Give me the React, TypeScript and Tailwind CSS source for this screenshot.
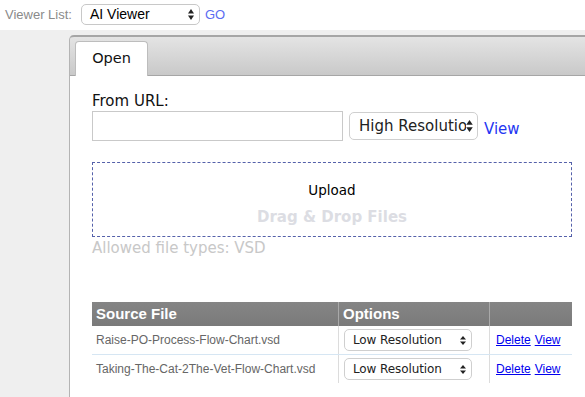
import React from "react";

const Arrows = ({ w = 6, h = 9 }: { w?: number; h?: number }) => (
  <svg width={w} height={h} viewBox="0 0 6 9" className="shrink-0">
    <polygon points="0,3.6 3,0 6,3.6" fill="#222" />
    <polygon points="0,5.4 3,9 6,5.4" fill="#222" />
  </svg>
);

export default function App() {
  const rows = [
    "Raise-PO-Process-Flow-Chart.vsd",
    "Taking-The-Cat-2The-Vet-Flow-Chart.vsd",
  ];
  return (
    <div className="w-[585px] h-[397px] overflow-hidden bg-white flex flex-col">
      {/* top bar */}
      <div className="h-[30px] shrink-0 flex items-center pl-[5px]" style={{ fontFamily: '"Liberation Sans", Arial, sans-serif' }}>
        <span className="text-[13px] text-[#8a8a8a] mr-[9px]">Viewer List:</span>
        <div className="w-[119px] h-[21px] mt-[-2px] border border-[#c8c8c8] rounded-[5px] flex items-center justify-between pl-[8px] pr-[5px] bg-white">
          <span className="text-[14px] text-black">AI Viewer</span>
          <svg width="6" height="11" viewBox="0 0 6 11">
            <polygon points="0,4.4 3,0 6,4.4" fill="#222" />
            <polygon points="0,6.6 3,11 6,6.6" fill="#222" />
          </svg>
        </div>
        <span className="text-[13px] text-[#5b6cf2] ml-[5px]">GO</span>
      </div>

      {/* main area */}
      <div className="flex-1 bg-[#efefef] pl-[69px] pt-[5px]">
        <div className="w-[560px] h-full bg-white border-l border-[#b4b4b4] rounded-tl-[5px] flex flex-col">
          {/* tab header */}
          <div className="h-[41px] shrink-0 rounded-tl-[4px] border-t-2 border-b border-[#a6a6a6] bg-gradient-to-b from-[#e4e4e4] to-[#c9c9c9] flex items-end pl-[5px]">
            <div
              className="w-[73px] h-[35px] -mb-px bg-white border border-b-0 border-[#bdbdbd] rounded-t-[4px] flex items-center justify-center text-[14.5px] text-[#111]"
              style={{ fontFamily: '"DejaVu Sans", Verdana, sans-serif' }}
            >
              Open
            </div>
          </div>

          {/* body */}
          <div className="pl-[22px] pt-[16px] w-[502px]" style={{ fontFamily: '"DejaVu Sans", Verdana, sans-serif' }}>
            <div className="text-[15px] leading-[18px] text-[#111]">From URL:</div>
            <div className="flex items-center mt-[1px]">
              <div className="w-[251px] h-[30px] border border-[#c9c9c9] bg-white" />
              <div className="ml-[6px] w-[129px] h-[28px] border border-[#cfcfcf] rounded-[5px] flex items-center pl-[9px] pr-[4px] overflow-hidden">
                <span className="text-[15px] text-[#222] whitespace-nowrap overflow-hidden w-[109px]">High Resolution</span>
                <svg width="7" height="12" viewBox="0 0 6 11" className="shrink-0">
                  <polygon points="0,4.4 3,0 6,4.4" fill="#222" />
                  <polygon points="0,6.6 3,11 6,6.6" fill="#222" />
                </svg>
              </div>
              <span className="ml-[6px] mt-[6px] text-[15px] text-[#1f36f2]">View</span>
            </div>

            <div className="mt-[21px] w-[480px] h-[75px] border border-dashed border-[#5561aa] flex flex-col items-center pt-[19px]">
              <div className="text-[13.5px] leading-[16px] text-black">Upload</div>
              <div className="mt-[10px] text-[15px] leading-[18px] font-bold text-[#dcdde3]">Drag &amp; Drop Files</div>
            </div>
            <div className="mt-[2px] text-[15px] leading-[18px] text-[#c8c8c8]">Allowed file types: VSD</div>

            {/* table */}
            <div className="mt-[45px] w-[480px]">
              <div
                className="h-[24px] flex bg-gradient-to-b from-[#858585] to-[#7a7a7a] text-white font-bold text-[15px]"
                style={{ fontFamily: '"Liberation Sans", Arial, sans-serif' }}
              >
                <div className="w-[247px] flex items-center pl-[4px] border-r border-[#a9a9a9]">Source File</div>
                <div className="w-[151px] flex items-center pl-[4px] border-r border-[#a9a9a9]">Options</div>
                <div className="flex-1" />
              </div>
              {rows.map((r, i) => (
                <div key={r} className={`flex h-[28px] ${i === 0 ? "border-b border-[#d6e6f3] h-[29px]" : ""}`}>
                  <div
                    className="w-[247px] flex items-center pl-[4px] border-r border-[#dcdcdc] text-[12px] text-[#666]"
                    style={{ fontFamily: '"Liberation Sans", Arial, sans-serif' }}
                  >
                    {r}
                  </div>
                  <div className="w-[151px] flex items-center pl-[5px] border-r border-[#dcdcdc]">
                    <div className="w-[128px] h-[22px] border border-[#cfcfcf] rounded-[5px] flex items-center justify-between pl-[8px] pr-[5px]">
                      <span className="text-[12px] text-[#222] tracking-[-0.1px]">Low Resolution</span>
                      <Arrows />
                    </div>
                  </div>
                  <div
                    className="flex-1 flex items-center pl-[6px] text-[12px] text-[#0000ee]"
                    style={{ fontFamily: '"Liberation Sans", Arial, sans-serif' }}
                  >
                    <span className="underline">Delete</span>
                    <span className="underline ml-[4px]">View</span>
                  </div>
                </div>
              ))}
            </div>
          </div>
        </div>
      </div>
    </div>
  );
}
